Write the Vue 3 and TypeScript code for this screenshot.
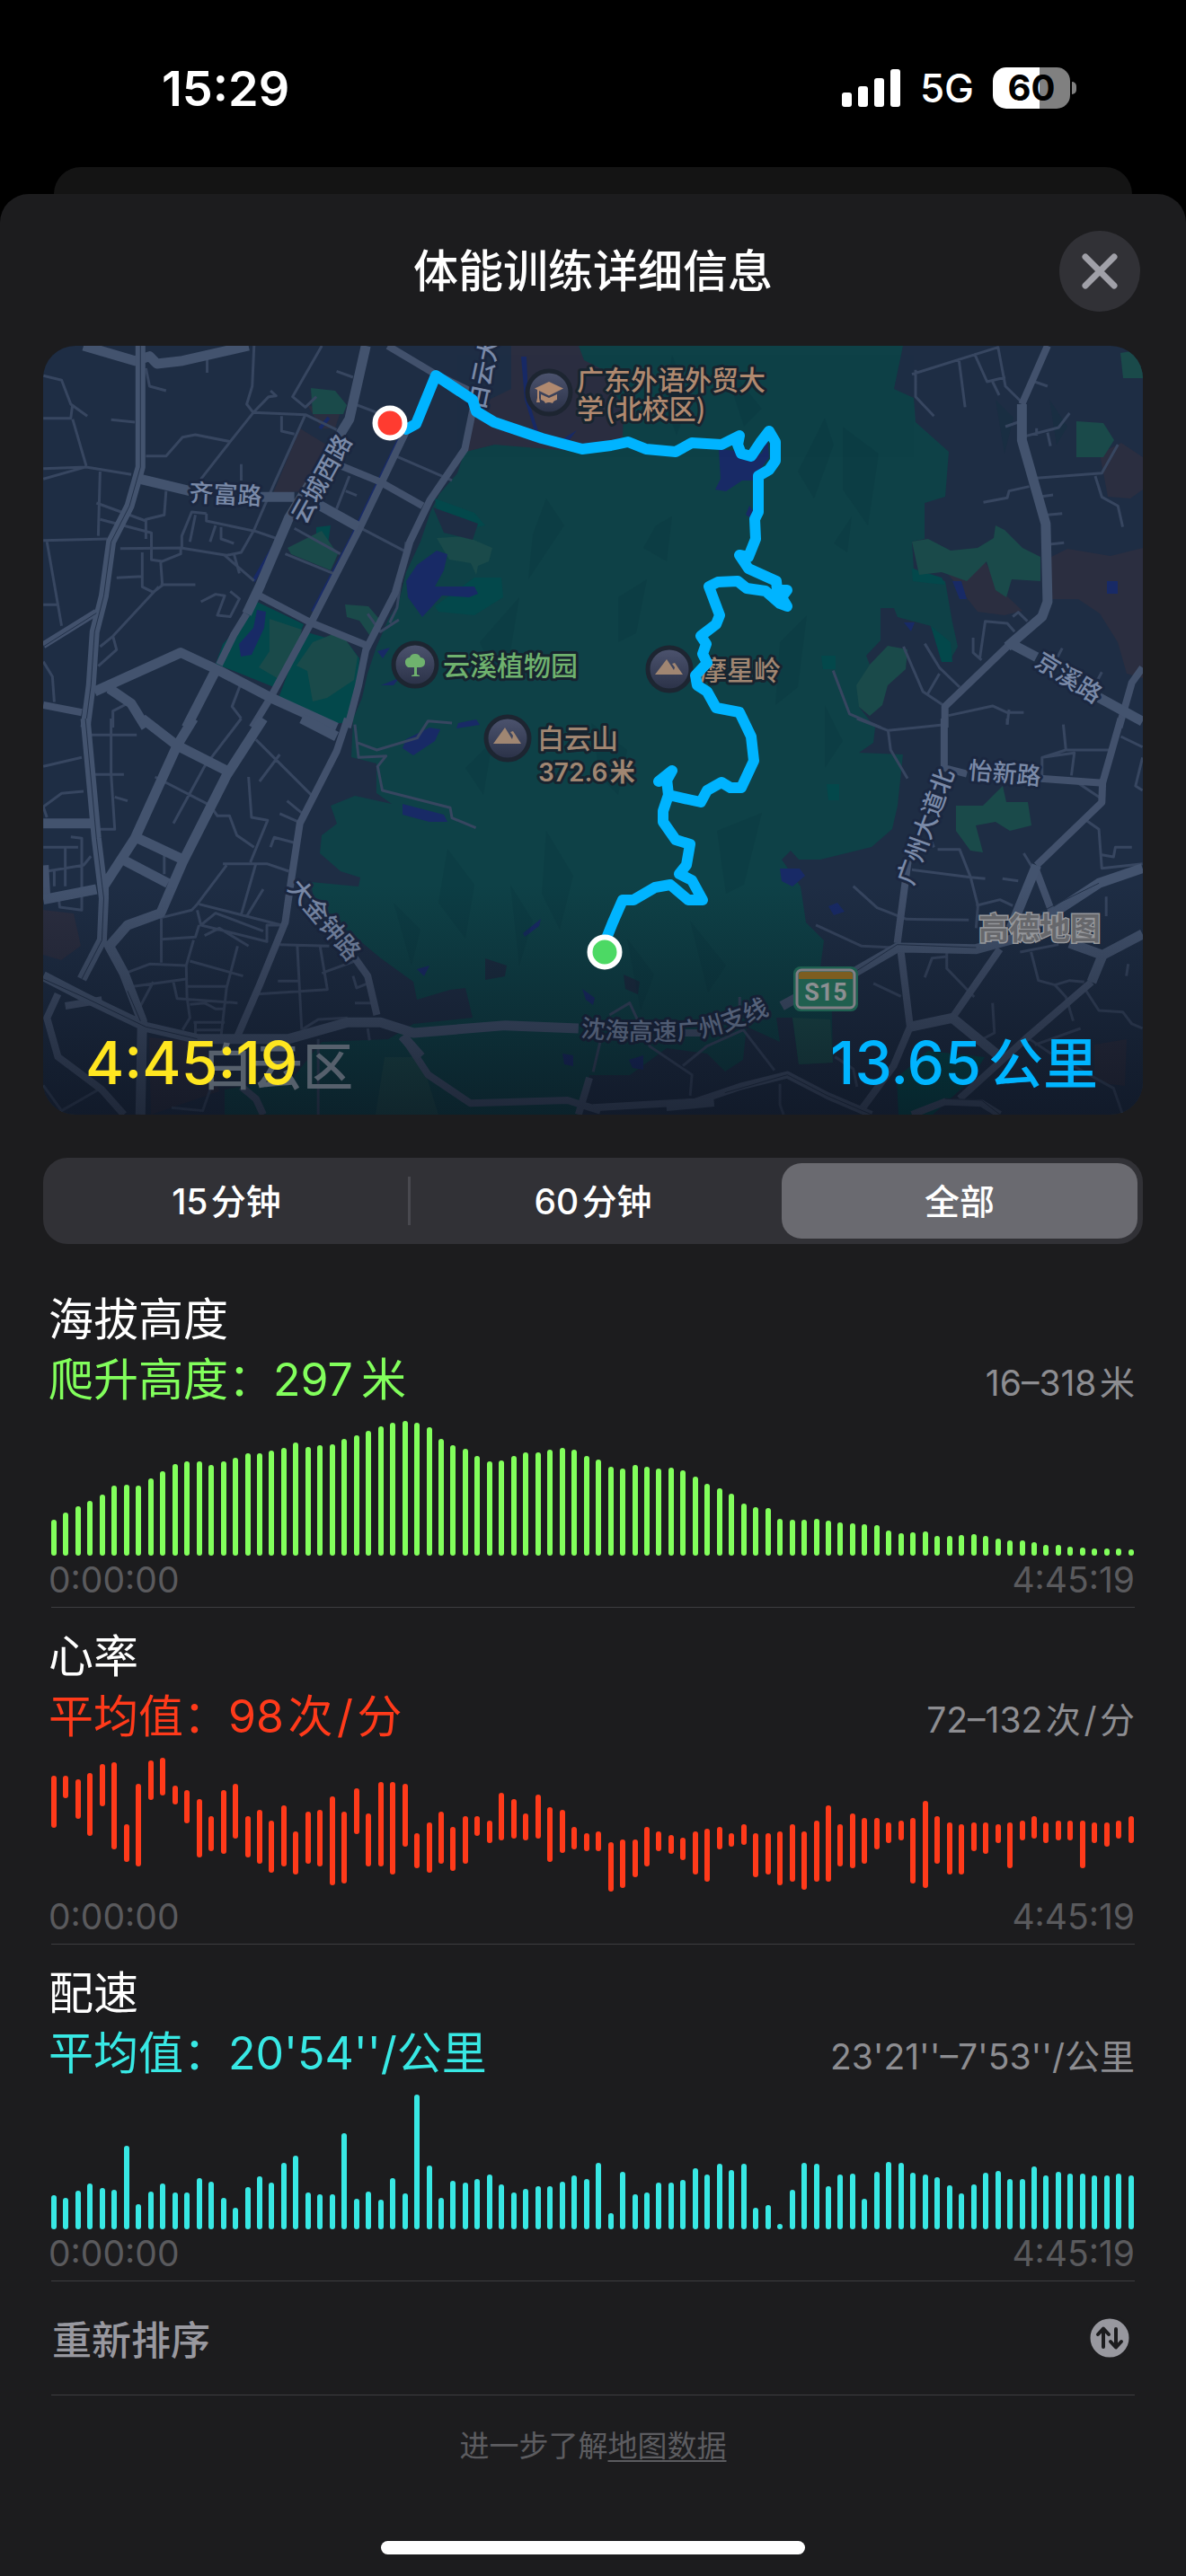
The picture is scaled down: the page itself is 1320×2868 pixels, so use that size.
<script setup lang="ts">
import { ref } from 'vue'

interface Metric {
  id: string
  title: string
  label: string
  value: string
  unit: string
  range: string
  rangeUnit: string
  color: string
  domain: [number, number]
  bars: [number, number][]
}

const spans = ['15\u200a分钟', '60\u200a分钟', '全部']
const activeSpan = ref(2)

const fromBase = (tops: number[], base: number): [number, number][] =>
  tops.map((t) => [t, base])

const elevation = [
  396, 372, 351, 333, 311, 283, 279, 281, 257, 234, 210, 201, 202, 212, 201,
  189, 175, 173, 165, 156, 139, 153, 148, 143, 127, 114, 99, 84, 72, 67, 72,
  87, 127, 147, 160, 182, 201, 198, 183, 171, 172, 161, 156, 161, 183, 196,
  220, 225, 213, 219, 225, 222, 230, 251, 276, 290, 310, 342, 354, 357, 392,
  396, 396, 393, 399, 405, 407, 411, 414, 432, 442, 438, 435, 450, 450, 447,
  444, 450, 460, 465, 464, 472, 480, 480, 486, 488, 492, 491, 493, 496,
]

const pace = [
  791, 800, 778, 752, 769, 773, 626, 820, 781, 753, 784, 783, 735, 748, 801,
  834, 766, 730, 751, 685, 661, 783, 790, 790, 584, 804, 781, 806, 736, 787,
  458, 694, 799, 744, 751, 738, 724, 755, 783, 772, 762, 762, 748, 727, 737,
  683, 850, 713, 788, 784, 751, 751, 741, 703, 723, 688, 709, 688, 832, 823,
  886, 774, 684, 688, 763, 722, 721, 804, 714, 680, 685, 718, 723, 733, 758,
  787, 757, 717, 711, 738, 738, 697, 727, 715, 721, 721, 727, 727, 720, 727,
]

const heart: [number, number][] = [
  [530, 705], [530, 605], [544, 676], [522, 733], [493, 633], [486, 777],
  [694, 819], [558, 833], [480, 612], [472, 598], [565, 627], [580, 690],
  [608, 804], [666, 783], [580, 791], [558, 741], [666, 804], [644, 826],
  [680, 855], [630, 833], [716, 862], [652, 826], [644, 833], [601, 898],
  [652, 890], [573, 726], [658, 833], [551, 833], [551, 862], [558, 769],
  [723, 840], [687, 855], [652, 826], [702, 848], [666, 826], [666, 733],
  [680, 755], [587, 747], [608, 741], [658, 747], [594, 741], [637, 819],
  [644, 790], [702, 776], [723, 783], [716, 783], [752, 918], [745, 906],
  [745, 869], [702, 833], [716, 783], [730, 791], [738, 812], [716, 862],
  [709, 884], [702, 776], [723, 769], [694, 762], [723, 869], [723, 862],
  [716, 898], [694, 884], [716, 912], [680, 884], [630, 884], [694, 833],
  [658, 840], [673, 826], [673, 776], [687, 755], [680, 747], [673, 890],
  [616, 906], [666, 826], [687, 862], [694, 862], [687, 783], [687, 791],
  [694, 755], [687, 840], [680, 747], [666, 741], [687, 755], [680, 747],
  [680, 747], [680, 840], [687, 755], [687, 769], [680, 741], [666, 755],
]

const metrics: Metric[] = [
  {
    id: 'elevation', title: '海拔高度', label: '爬升高度：', value: '297', unit: '\u2009米',
    range: '16–318', rangeUnit: '\u200a米', color: '#82ff5c',
    domain: [66, 516], bars: fromBase(elevation, 516),
  },
  {
    id: 'heart', title: '心率', label: '平均值：', value: '98', unit: '\u200a次\u200a/\u200a分',
    range: '72–132', rangeUnit: '\u200a次\u200a/\u200a分', color: '#ff3a1a',
    domain: [471, 921], bars: heart,
  },
  {
    id: 'pace', title: '配速', label: '平均值：', value: "20'54''/", unit: '公里',
    range: "23'21''–7'53''/", rangeUnit: '公里', color: '#38e8e4',
    domain: [457, 905], bars: fromBase(pace, 905),
  },
]

const rows = (m: Metric, [top, bottom]: [number, number]) => ({
  gridTemplateRows: `${top - m.domain[0]}fr ${bottom - top}fr ${m.domain[1] - bottom}fr`,
})
</script>

<template>
  <div class="screen">
    <header class="status">
      <time class="clock">15:29</time>
      <div class="status-right">
        <svg class="signal" viewBox="0 0 66 42" aria-label="信号">
          <rect x="0" y="26" width="11" height="16" rx="3" />
          <rect x="18" y="19" width="11" height="23" rx="3" />
          <rect x="36" y="10" width="11" height="32" rx="3" />
          <rect x="54" y="0" width="11" height="42" rx="3" />
        </svg>
        <span class="network">5G</span>
        <div class="battery"><span class="cell">60</span><i class="tip"></i></div>
      </div>
    </header>

    <div class="sheet-behind"></div>

    <main class="sheet">
      <div class="sheet-head">
        <h1>体能训练详细信息</h1>
        <button class="close" type="button" aria-label="关闭">
          <svg viewBox="0 0 90 90"><path d="M29 29 61 61M61 29 29 61" /></svg>
        </button>
      </div>

      <section class="map" aria-label="路线地图">
        <svg class="map-canvas" viewBox="0 0 1224 856" preserveAspectRatio="xMidYMid slice">
          <defs>
            <linearGradient id="shade" x1="0" y1="0" x2="0" y2="1">
              <stop offset="0" stop-color="#0a0f1a" stop-opacity="0" />
              <stop offset="1" stop-color="#0a0f1a" stop-opacity=".62" />
            </linearGradient>
            <linearGradient id="poi" x1="0" y1="0" x2="0" y2="1">
              <stop offset="0" stop-color="#4d546f" />
              <stop offset="1" stop-color="#2a3147" />
            </linearGradient>
            <path id="s15-line" d="M598 769Q660 776 722 772Q762 766 820 738" />
          </defs>

          <rect width="1224" height="856" fill="#1e2d44" />

          <path class="forest" d="M596 0H957L947 48 969 58 971 85 1008 118 1004 168 981 175V215L967 218 969 248 1004 262 1012 308 1018 335 1008 352 1000 345 988 312 951 302 947 292H932V328L916 345 920 355 908 375V402L926 425 924 442 908 453 957 455 951 512 945 538 922 558 865 572H841L832 562 822 572 843 602 849 642 869 662 865 692 877 698 879 798 841 800 834 748H816L820 775 783 758 779 795 759 808 739 788 694 782 653 812H608L600 856H202V828L278 815 310 775 384 772 412 755 478 748 470 715 453 717 416 728 412 708 376 682 335 648 302 622 298 597 351 602 353 592 331 585 308 565 310 545 327 532 320 512 347 501 388 510 371 498V465L343 458 345 415 355 392 361 365 371 335 384 305 396 285 404 252 420 218 431 185 441 165 461 142 469 118 502 110 596 108Z" />
          <g class="campus">
            <path d="M521 0H596L602 16 622 26 646 70 645 102 600 118 502 110 470 118 476 70 521 48Z" />
            <path d="M286 92 315 110 290 162 256 164Z" />
            <path d="M294 66 330 76 325 92 310 92Z" />
            <path d="M1004 250 1048 240 1072 278 1090 295 1070 300 1040 296Z" />
            <path d="M1122 235 1140 226 1188 234 1224 225V370L1206 365 1196 330 1176 298 1152 282H1122Z" />
            <path d="M1176 120 1200 108 1224 124V160L1210 170 1185 168Z" />
            <path d="M0 628 34 632 42 668 20 684 0 678Z" />
            <path d="M118 770 180 775 196 830 120 856Z" />
            <path d="M1170 778 1206 772 1204 824 1170 820Z" />
          </g>
          <g class="lawn">
            <path d="M236 284 290 310 262 382 192 354 200 332 225 305Z" />
            <path d="M304 202 320 200 316 228 304 226Z" />
            <path d="M290 318 340 332 352 348 350 376 340 420 310 420 262 392Z" />
            <path d="M436 290 480 258 510 258 512 280 480 300 440 296Z" />
            <path d="M436 170 480 186 492 200 470 204 440 190Z" />
            <path d="M967 248 1000 258 1004 266 984 264 968 262Z" />
            <path d="M988 312 1010 330 1012 352 1000 352Z" />
            <path d="M866 345H882V360H868Z" />
            <path d="M872 488H886V506H874Z" />
            <path d="M950 815 985 785 1048 792 1030 820 990 856H952Z" />
          </g>
          <g class="glade">
            <path d="M298 47 325 50 338 66 334 76H300Z" />
            <path d="M272 225 310 206 328 232 320 250 276 232Z" />
            <path d="M336 288 362 290 374 304 366 326 352 306 338 302Z" />
            <path d="M438 214 470 212 500 225 496 240 484 245 482 255 476 242 452 238Z" />
            <path d="M967 218 985 215 1010 228 1040 225 1058 214 1060 200 1070 205 1090 225 1110 235V262L1078 260 1072 280 1060 272 1050 240 1028 262 1000 252 975 255Z" />
            <path d="M1150 84 1180 86 1192 105 1180 124 1150 124Z" />
            <path d="M1199 8 1224 4V36H1202Z" />
            <path d="M940 334 962 338 960 360 940 378 934 400 920 412 908 402 905 378 920 355Z" />
            <path d="M1016 512 1046 512 1068 490 1072 508 1096 508 1100 534 1076 540 1060 530 1038 534 1046 564 1032 562 1016 540Z" />
            <path d="M252 304 288 316 280 350 264 372 240 358 252 340Z" />
            <path d="M300 330 330 318 350 346 346 372 316 392 300 396 294 362 282 356Z" />
            <path d="M380 792H420L440 856H370Z" />
            <path d="M834 748 876 750 879 798 841 800Z" />
          </g>
          <path d="M434 180 484 198 478 216 446 208Z" fill="#1e2d44" />
          <path d="M492 682 516 690 514 702 492 706ZM646 700 664 708 662 722 648 716Z" fill="#1a2c40" />
          <g class="water">
            <path d="M438 228 450 232 446 250 436 268 480 268 484 276 474 280 444 278 422 302 406 280 404 262 416 244Z" />
            <path d="M752 115 800 120 806 100 808 124 790 150 778 150 760 162 748 160 754 148Z" />
            <path d="M532 12H538L540 60 552 98 578 104 594 94 580 112 548 98 536 60Z" />
            <path d="M786 178 792 186 788 192 782 188Z" />
            <path d="M238 294 248 296 246 314 232 344 220 346 218 332 234 314Z" />
            <path d="M430 425 442 427 436 440 412 456 400 448 404 438Z" />
            <path d="M400 510 446 522 450 530 430 530 400 522Z" />
            <path d="M372 340 386 336 378 348ZM376 378 396 370 390 378ZM462 420 482 416 486 422 460 426Z" />
            <path d="M820 582H842L848 590 834 602 822 596Z" />
            <path d="M874 624 884 620 892 630 880 634Z" />
            <path d="M1012 262H1022L1028 282 1020 282ZM958 308 970 308 966 318ZM1184 262H1196V276H1184Z" />
            <path d="M416 694 430 690 424 702ZM534 654 554 638 552 646 536 658ZM600 716 614 726 612 734 604 728ZM578 788 590 790 590 802 580 800ZM652 795 668 790V806L656 804Z" />
          </g>
          <path class="canal" d="M318 80 308 92M276 190 234 262M396 104 342 216 300 296" />

          <g class="relief">
            <path d="M700 10 720 60 705 100 690 60ZM760 20 800 70 780 90 770 60ZM890 90 930 120 918 200 890 160ZM840 140 870 80 880 110 858 170Z" />
            <path d="M682 200 700 190 694 240 668 225ZM880 220 900 190 895 230ZM560 170 580 200 540 260 545 210ZM486 330 530 280 520 340 500 360Z" />
            <path d="M640 280 672 260 660 320 640 330ZM610 420 650 450 640 500 620 480ZM450 560 480 600 470 660 440 620ZM560 540 590 590 575 650 555 610Z" />
            <path d="M820 330 850 300 840 380 815 400ZM750 540 800 520 780 600 760 610ZM520 600 545 640 530 690ZM470 470 500 440 490 500ZM870 400 890 440 870 470Z" />
            <path d="M650 660 680 700 665 740ZM720 640 760 690 740 720ZM390 620 420 650 410 690ZM1060 60 1080 80 1070 120ZM1120 60 1140 90 1128 110Z" />
          </g>

          <!-- north-west tile -->
          <g class="tile" transform="translate(-8 -15) scale(.408 .3333)">
            <g class="lane">
              <path d="M20 145 70 160 95 240 140 280M20 287H95L100 240M100 290 137 445M20 455 137 450 260 475M20 490 140 448M175 465 170 680M205 292 270 300M300 120 310 180 355 195M467 85V135M595 45 590 180 575 240 593 268 735 275 820 325M780 45 700 215 735 250 765 215M640 195 655 212 635 215 593 268 530 365 450 490M530 365 435 342 400 350 355 413H300M670 280V330L705 340M735 275 650 505 595 660 560 735 520 745 395 720 230 722" />
              <path d="M355 530 350 610 300 625V690M165 570 300 630M175 625 315 670V760L345 765 395 740V720M465 605 425 600 398 680V720M465 605V630L600 665 660 690M435 610 420 700M490 645 475 700M505 650V690L540 705M540 740 555 805M20 695 195 690M30 700 70 980M290 735V850L320 868 345 845 340 765M220 820 290 815M340 843H435M335 850 210 1015 175 1050M210 1015 220 1060 170 1115M450 900 490 875 515 880 495 945 530 950 555 890 530 865M595 830 515 745M20 910H60M560 440V495M855 480 820 590M845 530 875 545M820 130 865 150M870 240 945 275M985 415 1135 495M1010 700 985 920 965 970M905 940 940 1000 990 960M705 655 830 740M680 740 820 810M880 650 1005 730M265 1230 210 1265V1320M560 1290 535 1250 560 1170M20 1100 45 1150 50 1235" />
            </g>
            <g class="street">
              <path d="M960 45 1090 140 1190 200M1010 330 885 650 755 960 640 1220 590 1320M1195 240 1170 390 1075 560 1020 700 980 870 900 1060 880 1180 850 1320M830 445 940 500 1055 580M610 880 750 970 900 1045M20 1045 165 935M575 940 540 1010 500 1110M20 1245 125 1270" />
            </g>
            <g class="avenue">
              <path d="M130 45 270 95 310 80 330 105 400 95 580 45M285 490 420 530M610 550H705M900 45 855 290 690 620 610 850 575 940M770 575 880 650M160 1200 395 1070 500 1130 640 1220 820 1320M490 1130 410 1320M200 1190 260 1240 300 1320" />
              <path d="M285 45V450L255 580 205 700 185 880 160 1000 150 1180 135 1320" />
            </g>
            <path class="seam" d="M285 45V450L255 580 205 700 185 880 160 1000 150 1180 135 1320M20 1050 165 938" />
          </g>

          <!-- north-east tile -->
          <g class="tile" transform="translate(612 -15) scale(.408 .3333)">
            <path class="lane" d="M870 140 1105 50 1125 180 1175 240M880 125V215L930 280M998 90 1015 250M1040 70 1075 165 1125 150M1090 165 1108 210M1210 487 1388 470 1432 375M1370 480 1388 550 1432 580 1445 650M1190 515 1135 530 1130 553 1065 568M1170 350 1270 318 1300 270M1210 320V345M1240 335 1248 380M1125 315 1160 300M1205 165 1240 180M1240 610 1280 605M1245 708 1285 703M1225 548 1255 543M655 1130 700 1275 785 1320M847 1050 900 1200 955 1245M905 1040 945 1120 1000 1185M945 1140 912 1210M970 1280 1090 1248 1130 1270H1175M1135 1260 1130 1310M1055 1090 1070 965 1130 972 1150 1000M1037 1020V1070L1060 1095M1145 950 1160 935 1185 965M1280 1055 1265 1090M1388 1135 1375 1165" />
            <path class="street" d="M1240 45 1170 240M1499 1120 1470 1170 1435 1320M1230 940 1130 1050 960 1250V1320" />
            <path class="avenue" d="M1170 240V360L1235 640 1240 900 1225 950 1130 1050M1140 1040 1210 1085M1380 1220 1499 1300" />
          </g>

          <!-- south-west tile -->
          <g class="tile" transform="translate(-8 415) scale(.408 .3333)">
            <path class="lane" d="M150 55H275M205 0V185L215 370H175M160 187H240M20 160 125 130M130 243 70 250 20 295 30 330M215 262 250 275M560 0 460 160 375 350M325 195 475 290 495 325H528L548 390 595 430M600 70 755 260M665 120 610 210M580 195 588 330 632 340 585 480M665 318 725 350M685 275 735 325M640 430 650 397 705 415M510 485H630L690 510M520 490 440 620 425 640 342 665V815M600 485 560 655M620 570 575 660M445 620 670 690M440 640 450 690 630 745V690L670 690M450 690 490 650 620 710M460 725 500 700 580 760M342 737 435 730 445 690M550 760 520 900 505 1060M245 850 310 820 410 825 430 740M420 810 565 860M410 825 412 930 420 1000 400 1040M265 895 410 870M415 895H520M375 880 385 935 550 950M665 755 800 760M713 760 725 1040M775 760 795 905 605 920M660 877H715M780 850 870 810M865 860 875 900 905 885M870 950H915M430 1015H515M435 1040H510M435 1010V1055M420 955 460 950 490 970H515M320 880 285 960M905 1035 910 1075M725 1040 770 1005 850 1000M870 20 880 130 955 125 932 160 945 240 1130 298 1135 332 1200 365M875 80 930 105 1040 65 1070 8 1135 15M20 430H115M30 510 130 490 150 460M95 395 125 400V640L65 630 60 580M80 430V560M50 510V560M350 440V520M370 1300 455 1310 475 1240M20 1225 70 1310 170 1240M770 1070V1323M1540 1075 1520 1180" />
            <path class="street" d="M850 0 820 110 720 350 695 550 680 680 610 890 550 1060M870 800 905 860 930 990M1000 1060 1070 1190 1185 1285 1450 1275 1540 1310M60 920 30 1000 60 1130 180 1240 240 1323M560 1230 600 1270 620 1323M80 960 180 940M25 490 30 600M1510 1200 1480 1323" />
            <path class="avenue" d="M135 0 165 400 185 600 180 740 125 870M20 350H150M20 605 165 570M290 0 385 90 530 180M430 0 385 90 270 400 185 560 185 600M620 0 520 190 400 480 340 650 250 690 200 760 240 850 290 1010 285 1323M270 395 400 470M235 470 360 550M725 0 820 60M20 860 130 930 300 1030 440 1070H690L850 1015H940L1030 1050 1280 1025 1480 1035M1000 1060 1050 1130" />
            <path class="seam" d="M135 0 165 400 185 600 180 740 125 870M20 870 130 930 300 1030 440 1070M250 910 285 1010" />
          </g>

          <!-- south-east tile -->
          <g class="tile" transform="translate(612 415) scale(.408 .3333)">
            <path class="lane" d="M720 0 805 40 960 20M805 40 812 105 858 200M1130 0V20M1283 20 1290 105H1410M1290 105 1225 130V190M1225 130 1313 115 1305 190M1310 205 1390 270M1440 60 1499 95M1499 130 1480 225 1499 240M915 385 930 430M940 437H1000L1030 530 1050 625 1045 700M870 505 1030 530 1070 535M710 560 775 632 855 670 1025 673M608 690 733 760 820 765M1045 625 1110 605 1145 625M1117 535 1160 542M1175 450 1205 510M1345 340 1380 370 1388 500 1499 485M1388 455 1420 462 1425 430H1470M1400 595V660M965 780V835L1040 930M965 795 925 800 905 865M765 885 840 928M1195 780 1215 875 1260 890 1290 930 1310 1010M1260 890 1300 875 1340 880M1340 900 1380 975 1445 980 1470 1020 1499 1035M1090 950 1095 1050 1040 1085M1205 1090 1330 1035M1190 1070 1250 1120M1165 780 1270 755M1460 820 1455 860M45 990 100 950 155 1095 270 1190 265 1260M245 1160 310 1095 410 1040 495 1175M400 930V1000M510 1220V1290L520 1323M660 1130 710 1170 720 1230M1310 1160 1420 1235 1445 1323" />
            <path class="street" d="M958 0V165L1020 185M1220 200 1390 215M1440 0 1390 215 1388 280 1210 490M860 470 830 750M840 780 865 1030 820 1160 730 1310M1210 510 1250 640M1110 770 980 1000M1360 880 1180 1070 1000 1270M0 1300 280 1280 400 1230 530 1190 640 1260 760 1323M870 1323 960 1280 1060 1285 1110 1323M250 1050H295" />
            <path class="avenue" d="M1210 490 1140 700M515 960 560 930M710 850 830 765 1045 770 1150 735 1380 550 1499 500M1300 750 1390 790 1499 720M1390 790 1360 880M865 1030 980 1000 1100 1120M200 1295 330 1280" />
            <path class="seam" d="M710 850 830 755 1045 765M1215 650 1380 550M360 1250 530 1190 640 1260 760 1323M960 1270 1060 1275 1110 1323" />
          </g>

          <g class="road-name">
            <text x="162" y="173" transform="rotate(3 162 173)">齐富路</text>
            <text transform="translate(292 200) rotate(-61)">云城西路</text>
            <text transform="translate(491 72) rotate(-78)">白云大道</text>
            <text transform="translate(271 604) rotate(50)">大金钟路</text>
            <text transform="translate(1102 356) rotate(32)">京溪路</text>
            <text transform="translate(1029 482) rotate(5)">怡新路</text>
            <text transform="translate(968 602) rotate(-70)">广州大道北</text>
            <text><textPath href="#s15-line">沈海高速广州支线</textPath></text>
          </g>

          <rect y="600" width="1224" height="256" fill="url(#shade)" />
          <text class="district" x="177" y="823">白云区</text>

          <g>
            <rect x="835" y="691" width="72" height="50" rx="8" fill="#1d5f50" />
            <rect x="839" y="695" width="64" height="42" rx="5" fill="#205f4f" stroke="#827f86" stroke-width="3" />
            <path d="M841 705V700Q841 697 844 697H898Q901 697 901 700V705Z" fill="#7d5d20" />
            <text class="shield" x="871" y="729">S15</text>
          </g>
          <text class="brand" x="1041" y="661">高德地图</text>

          <g class="poi">
            <circle cx="563" cy="52" r="24" /><circle cx="414" cy="355" r="24" />
            <circle cx="697" cy="360" r="24" /><circle cx="517" cy="437" r="24" />
          </g>
          <g fill="#b0896f">
            <path d="M563 40 579 47.500 563 55.500 547 47.500Z" />
            <path d="M554 54 563 58 572 54V60Q568 61 567 64Q563 62 559 64Q558 61 554 60Z" />
            <path d="M550 49H552V58L553 63H549L550 58Z" />
          </g>
          <g fill="#6fb26e">
            <path d="M414 343a6 6 0 0 1 6 4a5 5 0 0 1 5 6a5 5 0 0 1-5 5h-4v8l3 1v1h-9v-1l3-1v-8h-4a5 5 0 0 1-6-5a5 5 0 0 1 5-6a6 6 0 0 1 6-4z" />
          </g>
          <g fill="#a08672">
            <path d="M681 366 694 349 702 361 703 358 700 354 703 353 712 366Z" />
            <path d="M501 443 514 425 522 438 523 434 520 430 523 429 532 443Z" />
          </g>
          <g class="place">
            <text x="594" y="49"><tspan>广东外语外贸大</tspan><tspan x="594" y="81">学&#8202;(北校区)</tspan></text>
            <text x="445" y="367" class="garden">云溪植物园</text>
            <text x="731" y="372" class="peak">摩星岭</text>
            <text x="550" y="448" class="peak">白云山</text>
            <text x="551" y="485" class="peak height">372.6&#8202;米</text>
          </g>

          <path class="route" d="M404 93 415 87 437 33 478 60 482 73 502 85 555 103 600 115 632 111 651 107 671 115 704 118 722 108 755 110 775 100 773 110 777 120 788 123 798 108 808 95 815 107V128L808 138 796 145V185L792 193 793 215 785 235 775 233 785 248 816 262 817 272 828 272 822 280 828 290 820 287 804 273 783 270 773 262 751 263 741 268 753 300 749 310 732 323 738 332 734 343 739 353 726 367 728 378 739 385 749 403 775 408 788 435 791 462 777 492H765L755 486 739 495 732 508 718 505 696 500 694 482 685 485 700 473 694 484 696 500 690 518V530L704 550 720 555 716 578 708 588 722 595 734 617H718L698 600 681 603 657 617H645L634 642 626 662" />
          <circle cx="386" cy="86" r="16.500" fill="#ff3b30" stroke="#fff" stroke-width="6" />
          <circle cx="625" cy="675" r="16.500" fill="#4cd964" stroke="#fff" stroke-width="6" />
        </svg>
        <div class="totals">
          <span class="duration">4:45:19</span>
          <span class="distance">13.65<small>公里</small></span>
        </div>
      </section>

      <div class="segments" role="group" aria-label="时间范围">
        <button
          v-for="(s, i) in spans"
          :key="s"
          type="button"
          :class="{ on: i === activeSpan }"
          :aria-pressed="i === activeSpan"
          @click="activeSpan = i"
        >{{ s }}</button>
      </div>

      <div class="metrics">
        <section v-for="m in metrics" :key="m.id" class="metric" :style="{ '--tint': m.color }">
          <h2>{{ m.title }}</h2>
          <div class="summary">
            <p class="average">{{ m.label }}{{ m.value }}{{ m.unit }}</p>
            <p class="range">{{ m.range }}{{ m.rangeUnit }}</p>
          </div>
          <div class="chart">
            <i v-for="(b, i) in m.bars" :key="i" class="bar" :style="rows(m, b)"></i>
          </div>
          <div class="axis"><span>0:00:00</span><span>4:45:19</span></div>
        </section>

        <button class="reorder" type="button">
          <span>重新排序</span>
          <svg viewBox="0 0 48 48">
            <circle cx="24" cy="24" r="23.500" fill="#98989f" />
            <path d="M17 34V14M11 20 17 13.500 23 20M31 14V34M25 28 31 34.500 37 28" />
          </svg>
        </button>
      </div>

      <p class="note">进一步了解<a href="#map-data">地图数据</a></p>
      <div class="home-indicator"></div>
    </main>
  </div>
</template>

<style>
body {
  margin: 0;
  background: #000;
}
</style>

<style scoped>
.screen {
  display: flex;
  flex-direction: column;
  min-height: 100vh;
  background: #000;
  color: #fff;
  font-family: Inter, "Noto Sans CJK SC", sans-serif;
}
h1, h2, p {
  margin: 0;
  font-weight: 400;
}
button {
  padding: 0;
  border: 0;
  background: none;
  color: inherit;
  font: inherit;
}
.status {
  display: flex;
  justify-content: space-between;
  align-items: center;
  height: 60px;
  padding: 68px 122px 58px 180px;
}
.clock {
  font-size: 54px;
  font-weight: 600;
}
.status-right {
  display: flex;
  align-items: center;
  gap: 21px;
}
.signal {
  width: 66px;
  height: 42px;
  fill: #fff;
}
.network {
  font-size: 44px;
  font-weight: 500;
}
.battery {
  display: flex;
  align-items: center;
  gap: 2px;
}
.cell {
  width: 86px;
  border-radius: 15px;
  background: linear-gradient(90deg, #fff 60%, #808080 60%);
  color: #000;
  font-size: 40px;
  font-weight: 700;
  line-height: 46px;
  text-align: center;
}
.tip {
  width: 5px;
  height: 14px;
  border-radius: 0 5px 5px 0;
  background: #808080;
}
.sheet-behind {
  height: 30px;
  margin: 0 60px;
  border-radius: 30px 30px 0 0;
  background: #141414;
}
.sheet {
  display: flex;
  flex: 1;
  flex-direction: column;
  border-radius: 32px 32px 0 0;
  background: #1c1c1e;
}
.sheet-head {
  display: grid;
  grid-template-columns: 1fr auto 1fr;
  align-items: center;
  padding: 41px 51px 38px;
}
h1 {
  grid-column: 2;
  font-size: 50px;
  font-weight: 500;
  line-height: 66px;
}
.close {
  justify-self: end;
  width: 90px;
  height: 90px;
  border-radius: 50%;
  background: #313136;
}
.close svg {
  display: block;
  fill: none;
  stroke: #a0a0a8;
  stroke-width: 7;
  stroke-linecap: round;
}
.map {
  position: relative;
  margin: 0 48px;
  border-radius: 36px;
  overflow: hidden;
}
.map-canvas {
  display: block;
  width: 100%;
  font-family: "Noto Sans CJK SC", sans-serif;
}
.forest { fill: #0e4147; }
.campus { fill: #2b2e40; }
.glade { fill: #1a4a4a; }
.lawn { fill: #03484b; }
.water { fill: #182a66; }
.canal {
  fill: none;
  stroke: #182a66;
  stroke-width: 4;
}
.relief {
  fill: #08303a;
  opacity: .22;
}
.tile path {
  fill: none;
  vector-effect: non-scaling-stroke;
  stroke-linejoin: round;
}
.lane {
  stroke: #374660;
  stroke-width: 3;
}
.street {
  stroke: #42516c;
  stroke-width: 8;
}
.avenue {
  stroke: #43536e;
  stroke-width: 11;
}
.seam {
  stroke: #23324a;
  stroke-width: 1;
}
.road-name {
  fill: #7a8aa8;
  stroke: #1b2740;
  stroke-width: 6;
  stroke-linejoin: round;
  paint-order: stroke;
  font-size: 27px;
  font-weight: 500;
}
.district {
  fill: #56606c;
  font-size: 56px;
  font-weight: 500;
}
.shield {
  fill: #8c8f92;
  font-family: Roboto, sans-serif;
  font-size: 27px;
  font-weight: 700;
  text-anchor: middle;
}
.brand {
  fill: #66676b;
  stroke: #96989c;
  stroke-width: 3;
  paint-order: stroke;
  font-size: 34px;
  font-weight: 700;
}
.poi {
  fill: url(#poi);
  stroke: #1d2531;
  stroke-width: 5;
}
.place {
  fill: #b0896f;
  stroke: #17242f;
  stroke-width: 6;
  stroke-linejoin: round;
  paint-order: stroke;
  font-size: 30px;
  font-weight: 500;
}
.garden { fill: #6fb26e; }
.peak { fill: #a08672; }
.height {
  font-family: Inter, "Noto Sans CJK SC", sans-serif;
  font-size: 28px;
  font-weight: 600;
}
.route {
  fill: none;
  stroke: #00b4ff;
  stroke-width: 12;
  stroke-linecap: round;
  stroke-linejoin: round;
}
.totals {
  position: absolute;
  right: 0;
  bottom: 16px;
  left: 0;
  display: flex;
  justify-content: space-between;
  align-items: baseline;
  padding: 0 50px 0 47px;
  font-size: 66px;
  font-weight: 500;
  line-height: 80px;
}
.duration { color: #ffe620; }
.distance { color: #00b4ff; }
.distance small {
  margin-left: 8px;
  font-size: 61px;
}
.segments {
  display: grid;
  grid-template-columns: repeat(3, 1fr);
  gap: 12px;
  margin: 48px 48px 0;
  padding: 6px;
  border-radius: 27px;
  background: #313136;
}
.segments button {
  position: relative;
  height: 84px;
  padding-bottom: 4px;
  border-radius: 22px;
  font-size: 39px;
  font-weight: 500;
}
.segments .on {
  background: #6a6a70;
}
.segments button:first-child:not(.on)::after {
  position: absolute;
  top: 15px;
  right: -7px;
  width: 3px;
  height: 54px;
  background: #49494f;
  content: "";
}
.metrics {
  margin: 30px 57px 0;
}
.metric {
  padding: 21px 0 6px;
  border-bottom: 1px solid #3d3d40;
}
h2 {
  font-size: 50px;
  line-height: 67px;
}
h2, .average, .axis {
  margin-left: -3px;
}
.summary {
  display: flex;
  justify-content: space-between;
  align-items: baseline;
  height: 67px;
  line-height: 67px;
}
.average {
  color: var(--tint);
  font-size: 50px;
}
.range {
  color: #8d8d91;
  font-size: 39px;
}
.chart {
  display: flex;
  justify-content: space-between;
  height: 150px;
  margin-top: 12px;
}
.bar {
  display: grid;
  width: 6px;
}
.bar::before {
  grid-row: 2;
  border-radius: 3px;
  background: var(--tint);
  content: "";
}
.axis {
  display: flex;
  justify-content: space-between;
  margin-top: 3px;
  color: #5a5a5d;
  font-size: 39px;
  line-height: 48px;
}
.reorder {
  display: flex;
  justify-content: space-between;
  align-items: center;
  width: 100%;
  height: 127px;
  padding: 0 4px 0 1px;
  border-bottom: 1px solid #3d3d40;
  color: #98989f;
  font-size: 44px;
  font-weight: 500;
}
.reorder svg {
  width: 48px;
  height: 48px;
  fill: none;
  stroke: #1c1c1e;
  stroke-width: 4;
  stroke-linecap: round;
  stroke-linejoin: round;
}
.note {
  margin-top: 33px;
  color: #5c5c60;
  font-size: 33px;
  line-height: 46px;
  text-align: center;
}
.note a {
  color: inherit;
  text-underline-offset: 4px;
  text-decoration-thickness: 2px;
}
.home-indicator {
  width: 472px;
  max-width: 60%;
  height: 15px;
  margin: auto auto 24px;
  border-radius: 8px;
  background: #fff;
}
</style>
